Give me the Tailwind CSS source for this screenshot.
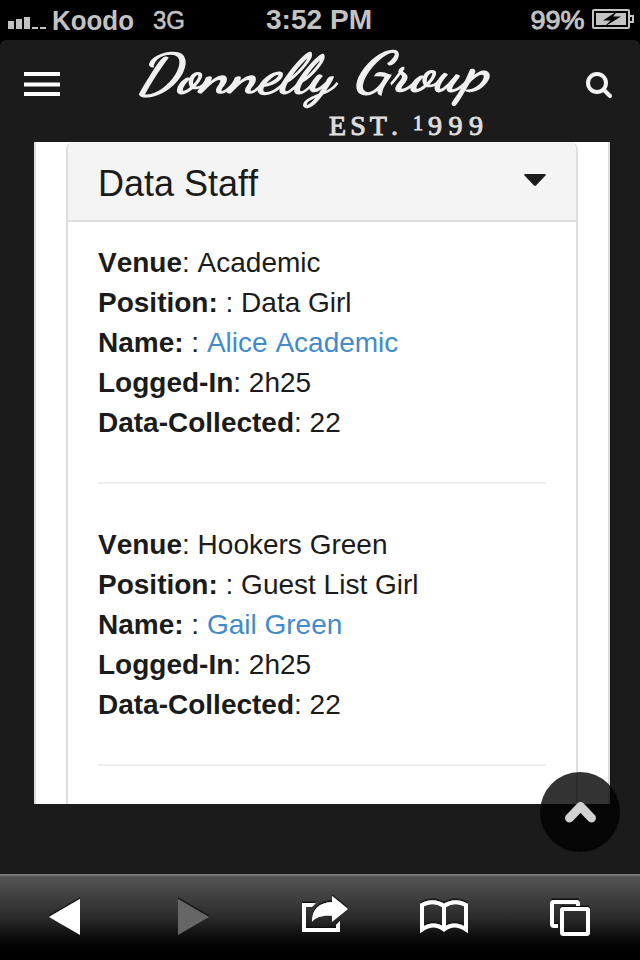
<!DOCTYPE html>
<html lang="en">
<head>
<meta charset="utf-8">
<title>Donnelly Group</title>
<script src="https://cdn.jsdelivr.net/npm/@tailwindcss/browser@4"></script>
</head>
<body class="bg-black">
<div class="relative flex h-[960px] w-[640px] flex-col overflow-hidden bg-black font-['Liberation_Sans',sans-serif] text-[#1b1b1b] [font-kerning:none]">

  <!-- Status bar -->
  <div class="grid h-10 shrink-0 grid-cols-3 items-center px-2 text-[#c3c3c3]">
    <div class="flex items-center">
      <svg class="h-10 w-[39px]" viewBox="0 0 39 40" fill="currentColor"><path d="M0 21h6v8H0zM8 19h6v10H8zM16 17h6v12h-6zM24 27h6v2h-6zM32 27h6v2h-6z"/></svg>
      <svg class="h-10 w-[145px]" viewBox="0 0 145 40" fill="currentColor"><text x="5" y="29.500" font-size="27" font-weight="700" textLength="82" lengthAdjust="spacingAndGlyphs">Koodo</text><text x="106" y="29" font-size="25" textLength="32" lengthAdjust="spacingAndGlyphs" stroke="currentColor" stroke-width=".5">3G</text></svg>
    </div>
    <svg class="h-10 w-full" viewBox="0 0 208 40" fill="currentColor"><text x="50" y="29" font-size="28" font-weight="700" textLength="106" lengthAdjust="spacingAndGlyphs">3:52 PM</text></svg>
    <svg class="h-10 w-[124px] justify-self-end overflow-visible" viewBox="0 0 124 40" fill="currentColor">
      <text x="22.500" y="29" font-size="26" stroke="currentColor" stroke-width=".9" textLength="54" lengthAdjust="spacingAndGlyphs">99%</text>
      <rect x="85" y="10" width="36" height="18" rx="1" fill="none" stroke="currentColor" stroke-width="2"/>
      <path d="M88 13h30v12H88z"/><path d="M122 16h3v6h-3" fill="none" stroke="currentColor" stroke-width="2"/>
      <path d="M109.500 11 95 20.500h7.500L96 27l17-10.500h-8z" fill="#000"/>
    </svg>
  </div>

  <!-- Site header -->
  <header class="flex h-[102px] shrink-0 items-start rounded-t-md bg-[#1b1b1b] pl-6">
    <svg class="mt-8 h-[26px] w-9 shrink-0" viewBox="0 0 36 26" fill="#fff"><path d="M0 0h36v4H0zM0 10.500h36v4H0zM0 20h36v4H0z"/></svg>
    <svg class="ml-20 h-[102px] w-[350px] shrink-0 overflow-visible" viewBox="0 0 350 102" fill="#f0f0f0">
      <g font-size="55" font-style="italic" font-family="Z003, 'URW Chancery L', 'Dancing Script', cursive" stroke="#f0f0f0" stroke-width="1.500">
        <text x="-3" y="52" textLength="196" lengthAdjust="spacingAndGlyphs">Donnelly</text>
        <text x="214" y="50" textLength="133" lengthAdjust="spacingAndGlyphs">Group</text>
      </g>
      <g font-family="'Liberation Serif', serif" fill="#ddd" stroke="#ddd" stroke-width="1">
        <text x="189" y="95" font-size="28" textLength="69">EST.</text>
        <text x="273" y="90" font-size="20">1</text>
        <text x="288" y="95" font-size="28" textLength="55">999</text>
      </g>
    </svg>
    <svg class="mt-8 ml-24 h-[27px] w-[27px] shrink-0" viewBox="0 0 27 27" fill="none" stroke="#f4f4f4" stroke-width="4"><circle cx="11" cy="11" r="9"/><path d="m18 18 6 6" stroke-linecap="round"/></svg>
  </header>

  <!-- Page content -->
  <main class="h-[732px] shrink-0 bg-[#1b1b1b] pr-[30px] pl-[34px]">
    <section class="h-[662px] overflow-hidden border-x-2 border-[#ddd] bg-white px-[30px]">
      <div class="h-[720px] overflow-hidden rounded-t-lg border-x-2 border-[#ddd]">
        <div class="flex h-20 items-center justify-between border-b-2 border-[#ddd] bg-[#f4f4f4] px-[30px]">
          <h2 class="pt-1.5 text-[36px] leading-[44px]">Data Staff</h2>
          <svg class="mb-0.5 h-3 w-[22px]" viewBox="0 0 22 12" fill="#1b1b1b"><path d="M1 0h20q1 0 .5 1.500L12 11.500q-1 .8-2 0L.5 1.500Q0 0 1 0z"/></svg>
        </div>
        <div class="px-[30px] pt-[21px] text-[28px] leading-10">
          <p><b>Venue</b>: Academic</p>
          <p><b>Position:</b> : Data Girl</p>
          <p><b>Name:</b> : <a class="text-[#428bca]">Alice Academic</a></p>
          <p><b>Logged-In</b>: 2h25</p>
          <p><b>Data-Collected</b>: 22</p>
          <hr class="mt-[39px] mb-[41px] border-t-2 border-[#eee]">
          <p><b>Venue</b>: Hookers Green</p>
          <p><b>Position:</b> : Guest List Girl</p>
          <p><b>Name:</b> : <a class="text-[#428bca]">Gail Green</a></p>
          <p><b>Logged-In</b>: 2h25</p>
          <p><b>Data-Collected</b>: 22</p>
          <hr class="mt-[39px] border-t-2 border-[#eee]">
        </div>
      </div>
    </section>
  </main>

  <!-- Browser toolbar -->
  <nav class="h-[86px] shrink-0 border-t-2 border-[#777] bg-linear-to-b from-[#555] via-[#2b2b2b] via-50% to-black">
    <svg class="h-[84px] w-full" viewBox="0 876 640 84">
      <defs>
        <filter id="shade" x="-10%" y="-10%" width="120%" height="120%"><feDropShadow dx="0" dy="-1.500" stdDeviation=".3" flood-color="#111"/></filter>
      </defs>
      <g filter="url(#shade)">
        <path d="M49 917 80 899v36z" fill="#fff"/>
        <path d="M178 899l31 18-31 18z" fill="#666"/>
        <path d="M302 903h14l-4 4h-6v21h30v-3l4-4v11h-38z" fill="#fff"/>
        <path d="M312 922c0-13 7-19 20-20v-6l16 13-16 13v-6c-9-1-16 1-20 6z" fill="#fff"/>
        <g fill="none" stroke="#fff" stroke-width="4"><path d="M422 929.500v-24.500q11-6 22 1 11-7 22-1v24.500q-12-8-22 0-10-8-22 0zM444 905v25"/></g>
        <path d="M558 926h-4q-2 0-2-2v-20q0-2 2-2h22q2 0 2 2v2" fill="none" stroke="#fff" stroke-width="4"/>
        <rect x="562" y="909" width="26" height="25" rx="1.500" fill="none" stroke="#fff" stroke-width="4"/>
      </g>
    </svg>
  </nav>

  <!-- Back to top -->
  <button class="absolute top-[772px] left-[540px] flex size-20 items-center justify-center rounded-full bg-black/80">
    <svg class="size-20" viewBox="0 0 80 80" fill="none" stroke="#d2d2d2" stroke-width="9" stroke-linecap="round" stroke-linejoin="round"><path d="m29.500 46 11-11.500 11 11.500"/></svg>
  </button>
</div>
</body>
</html>
